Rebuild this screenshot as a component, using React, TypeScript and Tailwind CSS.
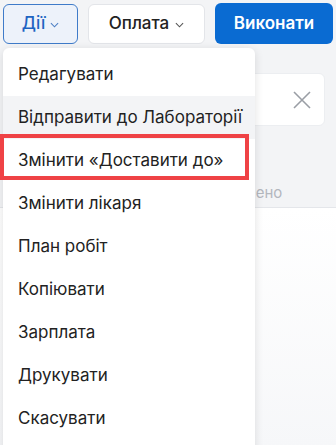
const items = [
  'Редагувати',
  'Відправити до Лабораторії',
  'Змінити «Доставити до»',
  'Змінити лікаря',
  'План робіт',
  'Копіювати',
  'Зарплата',
  'Друкувати',
  'Скасувати',
];

function Chevron({ className }: { className?: string }) {
  return (
    <svg className={className} viewBox="0 0 10 6" width="9" height="6" fill="none" stroke="currentColor" strokeWidth="1.2">
      <path d="M1 1l4 4 4-4" />
    </svg>
  );
}

export default function App() {
  return (
    <div className="relative h-[445px] w-[336px] overflow-hidden bg-[#f3f4f6] font-['Inter','Noto_Sans',sans-serif]">
      {/* toolbar */}
      <div className="flex items-center gap-[10px] px-[3px] pt-[3px]">
        <button className="flex h-[40px] w-[75px] items-center justify-center gap-[5px] rounded-md border border-[#3f7bc9] bg-[#edf2fa] text-[17px] font-medium text-[#1e64c2]">
          Дії
          <Chevron className="mt-[3px] text-[#4d7fc4]" />
        </button>
        <button className="flex h-[40px] w-[117px] items-center justify-center gap-[6px] rounded-md border border-[#e3e5e9] bg-white text-[17px] font-medium text-[#222]">
          Оплата
          <Chevron className="mt-[3px] text-[#555]" />
        </button>
        <button className="flex h-[41px] w-[118px] items-center justify-center rounded-md bg-[#0a6bd2] text-[17px] font-semibold text-white">
          Виконати
        </button>
      </div>

      {/* background content */}
      <div className="mt-[29px] px-[11px]">
        <div className="flex h-[53px] items-center justify-end rounded-md border border-[#eceef1] bg-white pr-[12px]">
          <svg viewBox="0 0 20 20" width="20" height="20" fill="none" stroke="#9a9ea5" strokeWidth="1.6">
            <path d="M2 2l16 16M18 2L2 18" />
          </svg>
        </div>
        <div className="mt-[56px] whitespace-nowrap pl-[177px] text-[15px] leading-[22px] text-[#b3b7be]">Не оплачено</div>
      </div>
      <div className="mt-[3px] h-px bg-[#e4e6ea]" />
      <div className="h-[240px] bg-gradient-to-b from-white to-[#f6f7f9]" />

      {/* dropdown */}
      <div className="absolute left-[3px] top-[48px] h-[420px] w-[252px] rounded-t-md bg-white pt-[5px] shadow-[0_2px_10px_rgba(0,0,0,0.12)]">
        {items.map((label, i) => (
          <div
            key={label}
            className={
              i === 1
                ? 'flex h-[43px] items-center bg-[#f3f4f6] pl-[15px] text-[17px] text-[#222]'
                : 'flex h-[43px] items-center pl-[15px] text-[17px] text-[#222]'
            }
          >
            {label}
          </div>
        ))}
      </div>

      {/* highlight box */}
      <div className="absolute left-0 top-[134px] h-[46px] w-[249px] border-[4px] border-[#ef4245]" />
    </div>
  );
}
